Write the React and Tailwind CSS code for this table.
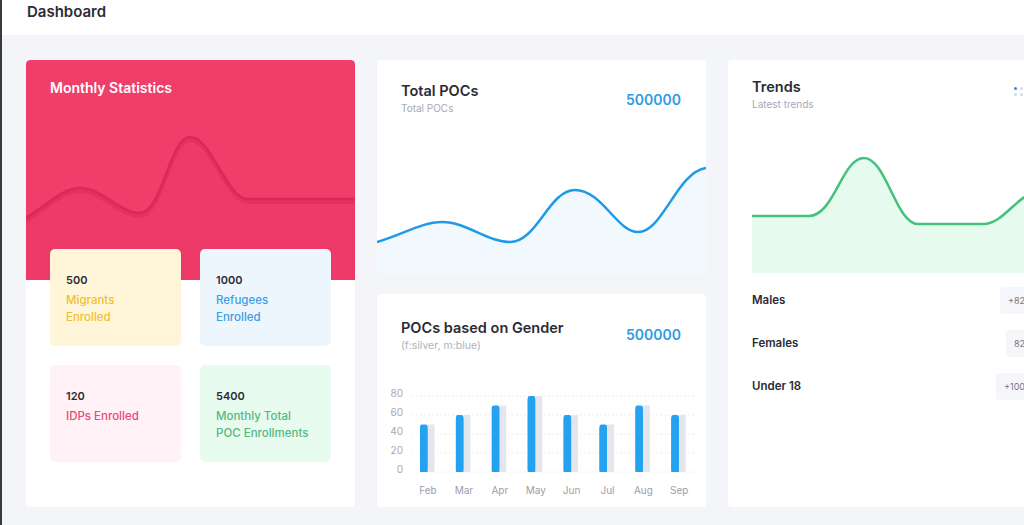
import React from "react"

const font = { fontFamily: "Inter, 'Open Sans', sans-serif" }

const tiles = [
  { value: "500", label: ["Migrants", "Enrolled"], bg: "bg-[#fff6da]", text: "text-[#f3bf2f]" },
  { value: "1000", label: ["Refugees", "Enrolled"], bg: "bg-[#edf6fd]", text: "text-[#3b9de3]" },
  { value: "120", label: ["IDPs Enrolled"], bg: "bg-[#fff1f5]", text: "text-[#e6497a]" },
  { value: "5400", label: ["Monthly Total", "POC Enrollments"], bg: "bg-[#e7fbef]", text: "text-[#52b982]" },
]

const bars = [
  { m: "Feb", v: 50 },
  { m: "Mar", v: 60 },
  { m: "Apr", v: 70 },
  { m: "May", v: 80 },
  { m: "Jun", v: 60 },
  { m: "Jul", v: 50 },
  { m: "Aug", v: 70 },
  { m: "Sep", v: 60 },
]

const trends = [
  { label: "Males", badge: "+82" },
  { label: "Females", badge: "82" },
  { label: "Under 18", badge: "+100" },
]

function MonthlyCard() {
  return (
    <div className="bg-white rounded-[4px] h-[447px] overflow-hidden">
      <div className="relative bg-[#f03e6b] h-[220px] rounded-[4px] px-6 pt-[17px]">
        <h2 className="relative z-10 text-white text-[14px] font-semibold">Monthly Statistics</h2>
        <svg className="absolute left-0 top-0" width="329" height="220" viewBox="0 0 329 220">
          <path
            d="M0,158 C20,146 36,128 54,128 C76,128 94,153 114,153 C136,153 144,77 164,77 C186,77 200,139 222,139 L329,139 L329,220 L0,220 Z"
            fill="#ee3a68"
          />
          <path
            d="M0,161 C20,149 36,131 54,131 C76,131 94,156 114,156 C136,156 144,80 164,80 C186,80 200,142 222,142 L329,142"
            fill="none"
            stroke="#c9204f"
            strokeOpacity="0.3"
            strokeWidth="4"
          />
          <path
            d="M0,158 C20,146 36,128 54,128 C76,128 94,153 114,153 C136,153 144,77 164,77 C186,77 200,139 222,139 L329,139"
            fill="none"
            stroke="#d8295a"
            strokeWidth="2.5"
          />
        </svg>
      </div>
      <div className="relative z-10 grid grid-cols-[131px_131px] gap-x-[19px] gap-y-[19px] px-6 -mt-[31px]">
        {tiles.map((t) => (
          <div key={t.value} className={`${t.bg} h-[97px] rounded-[5px] px-4 pt-[24px]`}>
            <div className="text-[11px] font-semibold text-[#2b2b35] leading-[14px]">{t.value}</div>
            <div className={`${t.text} text-[11.5px] font-medium leading-[17px] mt-[5px]`}>
              {t.label.map((l) => (
                <div key={l}>{l}</div>
              ))}
            </div>
          </div>
        ))}
      </div>
    </div>
  )
}

function TotalCard() {
  return (
    <div className="bg-white rounded-[4px] h-[214px] overflow-hidden flex flex-col">
      <div className="flex justify-between items-start px-6 pt-[22px]">
        <div>
          <h3 className="text-[14.5px] font-semibold text-[#2b2b35] leading-[18px]">Total POCs</h3>
          <p className="text-[10px] text-[#a7a7b7] leading-[14px] mt-[1px]">Total POCs</p>
        </div>
        <div className="text-[14px] font-semibold text-[#2d9be2] mt-[7px] mr-[1px]">500000</div>
      </div>
      <svg className="mt-auto" width="329" height="154" viewBox="0 60 329 154">
        <path
          d="M0,182 C25,175 45,162 65,162 C90,162 110,182 133,182 C160,182 172,130 198,130 C225,130 240,172 261,172 C286,172 300,112 329,108 L329,214 L0,214 Z"
          fill="#f1f8fe"
        />
        <path
          d="M0,182 C25,175 45,162 65,162 C90,162 110,182 133,182 C160,182 172,130 198,130 C225,130 240,172 261,172 C286,172 300,112 329,108"
          fill="none"
          stroke="#1f9ae8"
          strokeWidth="2.5"
        />
      </svg>
    </div>
  )
}

function GenderCard() {
  const base = 92
  const scale = 0.95
  return (
    <div className="bg-white rounded-[4px] h-[213px] flex flex-col">
      <div className="flex justify-between items-start px-6 pt-[25px]">
        <div>
          <h3 className="text-[14.5px] font-semibold text-[#2b2b35] leading-[18px]">POCs based on Gender</h3>
          <p className="text-[10.5px] text-[#b0b0bd] leading-[14px] mt-[2px]">(f:silver, m:blue)</p>
        </div>
        <div className="text-[14px] font-semibold text-[#2d9be2] mt-[5px] mr-[1px]">500000</div>
      </div>
      <svg className="mt-auto mb-[7px]" width="329" height="120" viewBox="0 0 329 120">
        {[0, 20, 40, 60, 80].map((v) => {
          const y = base - v * scale
          return (
            <g key={v}>
              <line x1="35" x2="320" y1={y} y2={y} stroke="#eeeef3" strokeDasharray="2 2" />
              <text
                x="26"
                y={y - 2}
                textAnchor="end"
                dominantBaseline="middle"
                fontSize="10"
                fill="#a8a8b5"
                style={font}
              >
                {v}
              </text>
            </g>
          )
        })}
        {bars.map((b, i) => {
          const cx = 51 + i * 35.9
          const h = b.v * scale
          return (
            <g key={b.m}>
              <rect x={cx - 0.5} y={base - h} width="7" height={h} fill="#e4e6ee" />
              <rect x={cx - 8} y={base - h} width="7.5" height={h} rx="2" fill="#24a2f0" />
              <rect x={cx - 8} y={base - h + 3} width="7.5" height={h - 3} fill="#24a2f0" />
              <text x={cx} y="114" textAnchor="middle" fontSize="10" fill="#9d9dab" style={font}>
                {b.m}
              </text>
            </g>
          )
        })}
      </svg>
    </div>
  )
}

function TrendsCard() {
  return (
    <div className="bg-white rounded-[4px] h-[447px] px-6 pt-[18px]">
      <div className="flex justify-between items-start">
        <div>
          <h3 className="text-[14.5px] font-semibold text-[#2b2b35] leading-[18px]">Trends</h3>
          <p className="text-[10px] text-[#a7a7b7] leading-[14px] mt-[1px]">Latest trends</p>
        </div>
        <div className="grid grid-cols-3 gap-[3px] mt-[9px] mr-[4px]">
          <span className="w-[3px] h-[3px] rounded-full bg-[#3f86c6]" />
          <span className="w-[3px] h-[3px] rounded-full bg-[#c9dcee]" />
          <span className="w-[3px] h-[3px] rounded-full bg-[#c9dcee]" />
          <span className="w-[3px] h-[3px] rounded-full bg-[#c9dcee]" />
          <span className="w-[3px] h-[3px] rounded-full bg-[#c9dcee]" />
          <span className="w-[3px] h-[3px] rounded-full bg-[#c9dcee]" />
        </div>
      </div>
      <svg className="mt-[19px]" width="281" height="143" viewBox="0 0 281 143">
        <path
          d="M0,86 L57,86 C82,86 90,28 112,28 C134,28 144,94 166,94 L231,94 C250,94 262,70 281,62 L281,143 L0,143 Z"
          fill="#e6fbee"
        />
        <path
          d="M0,86 L57,86 C82,86 90,28 112,28 C134,28 144,94 166,94 L231,94 C250,94 262,70 281,62"
          fill="none"
          stroke="#45c17c"
          strokeWidth="2.5"
        />
      </svg>
      <div className="mt-[14px] flex flex-col gap-[16px]">
        {trends.map((t) => (
          <div key={t.label} className="flex justify-between items-center h-[27px]">
            <span className="text-[11.5px] font-semibold text-[#2b2b35]">{t.label}</span>
            <span className="bg-[#f4f6f9] rounded-[4px] h-[27px] px-2 flex items-center text-[9px] text-[#777784]">
              {t.badge}
            </span>
          </div>
        ))}
      </div>
    </div>
  )
}

export default function App() {
  return (
    <div
      className="w-[1024px] h-[525px] overflow-hidden bg-[#f3f5f9] border-l-2 border-[#3a3a3a]"
      style={font}
    >
      {/* Header */}
      <header className="h-[35px] bg-white flex items-center pl-[25px]">
        <h1 className="text-[15px] font-semibold text-[#2b2b35] -mt-[10px]">Dashboard</h1>
      </header>

      {/* Main */}
      <main className="flex gap-[22px] pl-[24px] pt-[25px] w-[1100px]">
        <div className="w-[329px] shrink-0">
          <MonthlyCard />
        </div>
        <div className="w-[329px] shrink-0 flex flex-col gap-[20px]">
          <TotalCard />
          <GenderCard />
        </div>
        <div className="w-[329px] shrink-0">
          <TrendsCard />
        </div>
      </main>
    </div>
  )
}
